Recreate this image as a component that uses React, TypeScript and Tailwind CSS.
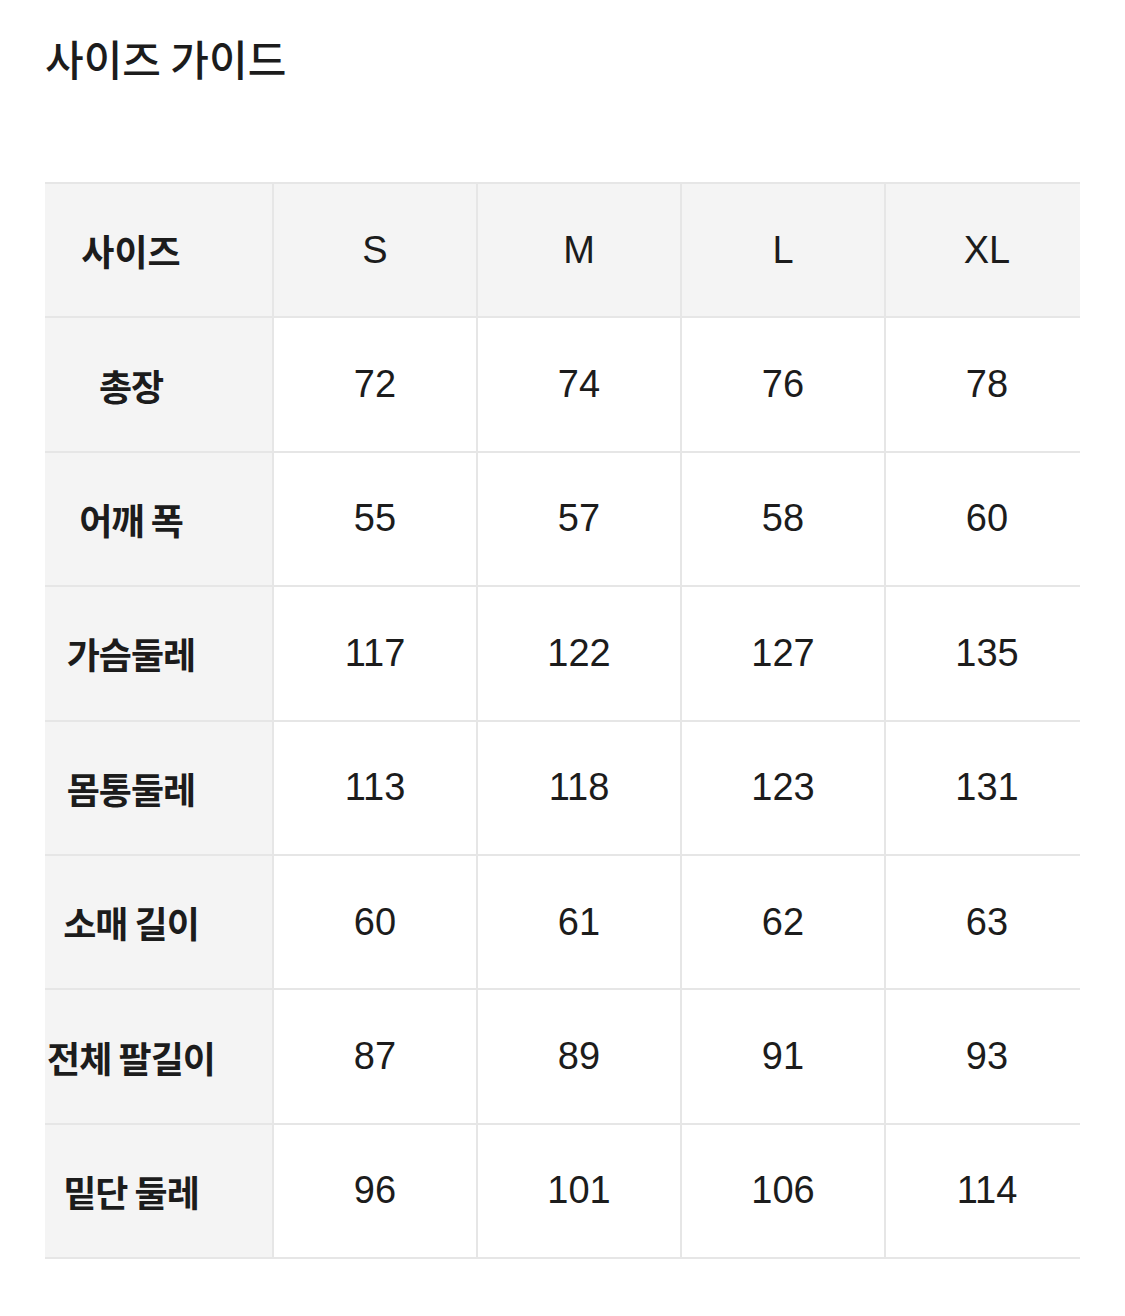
import { Fragment } from "react"

const sizes = ["S", "M", "L", "XL"]

const rows: { label: string; values: string[] }[] = [
  { label: "총장", values: ["72", "74", "76", "78"] },
  { label: "어깨 폭", values: ["55", "57", "58", "60"] },
  { label: "가슴둘레", values: ["117", "122", "127", "135"] },
  { label: "몸통둘레", values: ["113", "118", "123", "131"] },
  { label: "소매 길이", values: ["60", "61", "62", "63"] },
  { label: "전체 팔길이", values: ["87", "89", "91", "93"] },
  { label: "밑단 둘레", values: ["96", "101", "106", "114"] },
]

const labelFont = "font-['Noto_Sans_CJK_KR','Noto_Sans',sans-serif]"
const numFont = "font-['Liberation_Sans','Noto_Sans_CJK_KR',sans-serif]"

export default function App() {
  return (
    <div className="min-h-[1316px] w-[1125px] bg-white text-[#1c1c1c]">
      <div className="px-[45px] pt-[30px]">
        <h1 className={`${labelFont} text-[42px] font-medium leading-[56px]`}>
          사이즈 가이드
        </h1>

        {/* Size table */}
        <div className="mt-[96px] w-[1035px] overflow-hidden">
          <div className="grid w-[1045px] grid-cols-[227px_202px_202px_202px_202px] gap-[2px] bg-[#e6e6e6] py-[2px]">
            <div className={`${labelFont} flex h-[132.4px] items-center justify-center bg-[#f4f4f4] pr-[55px] text-[36px] font-bold`}>
              사이즈
            </div>
            {sizes.map((s) => (
              <div
                key={s}
                className={`${numFont} flex h-[132.4px] items-center justify-center bg-[#f4f4f4] text-[38px]`}
              >
                {s}
              </div>
            ))}

            {rows.map((row) => (
              <Fragment key={row.label}>
                <div
                  className={`${labelFont} flex h-[132.4px] items-center justify-center whitespace-nowrap bg-[#f4f4f4] pr-[55px] text-[36px] font-bold tracking-[-1px]`}
                >
                  {row.label}
                </div>
                {row.values.map((v, i) => (
                  <div
                    key={row.label + i}
                    className={`${numFont} flex h-[132.4px] items-center justify-center bg-white text-[38px]`}
                  >
                    {v}
                  </div>
                ))}
              </Fragment>
            ))}
          </div>
        </div>
      </div>
    </div>
  )
}
